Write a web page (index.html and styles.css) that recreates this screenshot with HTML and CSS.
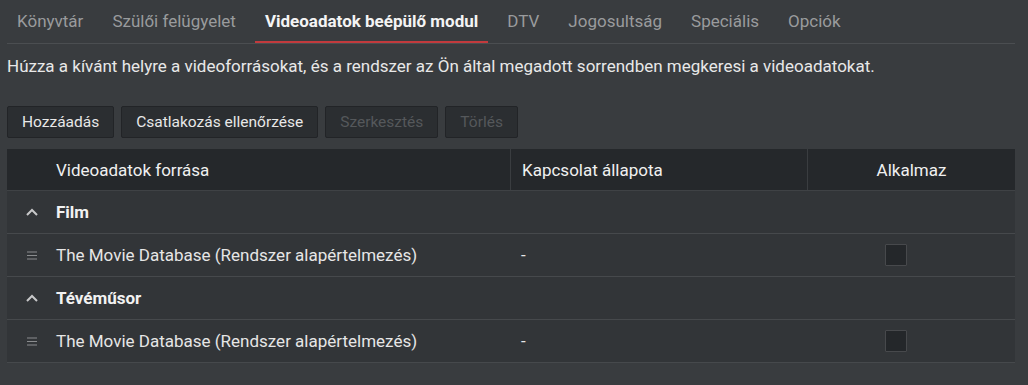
FILE: index.html
```html
<!DOCTYPE html>
<html lang="hu">
<head>
    <meta charset="UTF-8">
    <meta name="viewport" content="width=device-width, initial-scale=1.0">
    <title>Videoadatok beépülő modul</title>
    <link rel="stylesheet" href="styles.css">
</head>
<body>
    <div class="panel">
        <nav class="tabs">
            <a class="tab">Könyvtár</a>
            <a class="tab">Szülői felügyelet</a>
            <a class="tab active">Videoadatok beépülő modul</a>
            <a class="tab">DTV</a>
            <a class="tab">Jogosultság</a>
            <a class="tab">Speciális</a>
            <a class="tab">Opciók</a>
        </nav>

        <p class="hint">Húzza a kívánt helyre a videoforrásokat, és a rendszer az Ön által megadott sorrendben megkeresi a videoadatokat.</p>

        <div class="toolbar">
            <button>Hozzáadás</button>
            <button>Csatlakozás ellenőrzése</button>
            <button disabled>Szerkesztés</button>
            <button disabled>Törlés</button>
        </div>

        <div class="grid">
            <div class="grid-head">
                <div class="col col-source">Videoadatok forrása</div>
                <div class="col col-status">Kapcsolat állapota</div>
                <div class="col col-apply">Alkalmaz</div>
            </div>

            <div class="group">
                <span class="icon">
                    <svg width="14" height="10" viewBox="0 0 14 10"><path d="M2 8 L7 3 L12 8" fill="none" stroke="#c8c9ca" stroke-width="2"/></svg>
                </span>
                <span class="group-name">Film</span>
            </div>
            <div class="row">
                <div class="col col-source">
                    <span class="icon">
                        <svg width="10" height="9" viewBox="0 0 10 9"><path d="M0 1h10M0 4.5h10M0 8h10" stroke="#8a8c8e" stroke-width="1"/></svg>
                    </span>
                    The Movie Database (Rendszer alapértelmezés)
                </div>
                <div class="col col-status">-</div>
                <div class="col col-apply"><span class="check"></span></div>
            </div>

            <div class="group">
                <span class="icon">
                    <svg width="14" height="10" viewBox="0 0 14 10"><path d="M2 8 L7 3 L12 8" fill="none" stroke="#c8c9ca" stroke-width="2"/></svg>
                </span>
                <span class="group-name">Tévéműsor</span>
            </div>
            <div class="row">
                <div class="col col-source">
                    <span class="icon">
                        <svg width="10" height="9" viewBox="0 0 10 9"><path d="M0 1h10M0 4.5h10M0 8h10" stroke="#8a8c8e" stroke-width="1"/></svg>
                    </span>
                    The Movie Database (Rendszer alapértelmezés)
                </div>
                <div class="col col-status">-</div>
                <div class="col col-apply"><span class="check"></span></div>
            </div>
        </div>
    </div>
</body>
</html>
```

FILE: styles.css
```css
body {
    margin: 0;
    background-color: #393c3f;
    font-family: Roboto, "Liberation Sans", sans-serif;
    font-size: 17px;
    color: #e6e6e6;
}

.panel {
    padding: 0 13px 0 7px;
}

.tabs {
    display: flex;
    gap: 9px;
    height: 43px;
    border-bottom: 1px solid #4b4e51;
}

.tab {
    padding: 0 10px;
    line-height: 43px;
    color: #999b9d;
    border-bottom: 2px solid transparent;
    height: 41px;
}

.tab.active {
    color: #f4f4f4;
    font-weight: bold;
    border-bottom-color: #c23a3d;
}

.hint {
    margin: 0;
    padding: 10px 0 0;
    line-height: 24px;
    color: #e8e8e8;
}

.toolbar {
    display: flex;
    gap: 7px;
    margin-top: 28px;
}

.toolbar button {
    height: 32px;
    padding: 0 14px;
    font-family: inherit;
    font-size: 15.5px;
    color: #e8e8e8;
    background-color: #2b2e31;
    border: 1px solid #222427;
    border-radius: 2px;
}

.toolbar button:disabled {
    color: #55585b;
}

.grid {
    margin-top: 11px;
    background-color: #323538;
}

.grid-head {
    display: flex;
    height: 41px;
    background-color: #25282b;
    color: #f0f0f0;
    border-bottom: 1px solid #3f4245;
}

.col {
    display: flex;
    align-items: center;
}

.col-source {
    width: 503px;
    padding-left: 49px;
    box-sizing: border-box;
}

.col-status {
    width: 297px;
    padding-left: 11px;
    box-sizing: border-box;
}

.col-apply {
    flex: 1;
    justify-content: center;
}

.grid-head .col-status,
.grid-head .col-apply {
    border-left: 1px solid #3a3d40;
}

.group,
.row {
    display: flex;
    align-items: center;
    height: 42px;
    border-bottom: 1px solid #46494c;
    position: relative;
}

.group-name {
    font-weight: bold;
    color: #f2f2f2;
    padding-left: 49px;
}

.icon {
    position: absolute;
    left: 18px;
    top: 0;
    bottom: 0;
    width: 14px;
    display: flex;
    align-items: center;
    justify-content: center;
}

.row .col {
    height: 100%;
}

.check {
    width: 20px;
    height: 20px;
    background-color: #24272a;
    border: 1px solid #47494c;
    border-radius: 1px;
    margin-left: -31px;
}
```
